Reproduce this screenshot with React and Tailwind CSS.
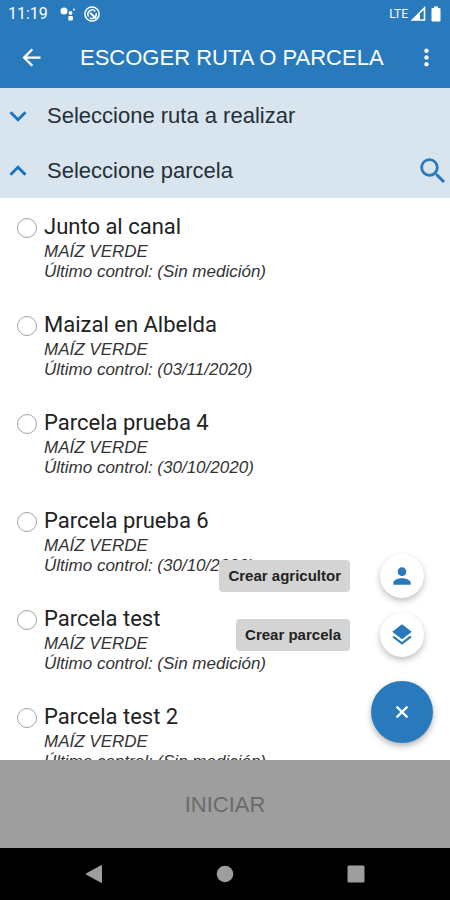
import React, { useState } from 'react';
import {
  MdArrowBack,
  MdExpandLess,
  MdExpandMore,
  MdLayers,
  MdMoreVert,
  MdPerson,
  MdSearch,
} from 'react-icons/md';

const parcels = [
  { id: 1, name: 'Junto al canal', crop: 'MAÍZ VERDE', last: 'Sin medición' },
  { id: 2, name: 'Maizal en Albelda', crop: 'MAÍZ VERDE', last: '03/11/2020' },
  { id: 3, name: 'Parcela prueba 4', crop: 'MAÍZ VERDE', last: '30/10/2020' },
  { id: 4, name: 'Parcela prueba 6', crop: 'MAÍZ VERDE', last: '30/10/2020' },
  { id: 5, name: 'Parcela test', crop: 'MAÍZ VERDE', last: 'Sin medición' },
  { id: 6, name: 'Parcela test 2', crop: 'MAÍZ VERDE', last: 'Sin medición' },
];

const StatusBar = () => (
  <div className="flex h-7 shrink-0 items-center justify-between px-2 font-['Roboto',sans-serif] text-white">
    <div className="flex items-center">
      <span className="w-10 text-base">11:19</span>
      <svg className="ml-3 size-4" viewBox="0 0 16 16" fill="currentColor" aria-hidden="true">
        <circle cx="4" cy="5" r="3.5" />
        <circle cx="10.5" cy="7" r="1.9" />
        <circle cx="14" cy="3.5" r="1" />
        <rect x="8.3" y="10" width="4.6" height="4.4" rx="1" />
      </svg>
      <svg className="ml-2 size-4" viewBox="0 0 16 16" fill="none" stroke="currentColor" strokeWidth="1.5" aria-hidden="true">
        <circle cx="8" cy="8" r="7.1" />
        <path d="M4.6 10.6a4.3 4.3 0 0 1 6.8-5.2M12.2 7a4.3 4.3 0 0 1-6.4 4.8" />
        <path d="M6 6.8l6 5.4" strokeWidth="2" />
      </svg>
    </div>
    <div className="flex items-center">
      <span className="text-xs">LTE</span>
      <svg className="ml-0.5 size-4" viewBox="0 0 16 16" aria-hidden="true">
        <path d="M14.5 2v12H2.5z" fill="none" stroke="currentColor" strokeWidth="1.6" />
        <path d="M10 6.5V14H2.5z" fill="currentColor" />
      </svg>
      <svg className="ml-1 h-4 w-3" viewBox="0 0 12 16" fill="currentColor" aria-hidden="true">
        <path d="M4 0.5h4V2h1.5a1 1 0 0 1 1 1v11.5a1 1 0 0 1-1 1h-7a1 1 0 0 1-1-1V3a1 1 0 0 1 1-1H4z" />
      </svg>
    </div>
  </div>
);

const Chevron = ({ open }) =>
  open ? (
    <MdExpandLess className="size-[34px] shrink-0 text-[#1673c1]" />
  ) : (
    <MdExpandMore className="size-[34px] shrink-0 text-[#1673c1]" />
  );

const Parcel = ({ parcel, checked, onSelect }) => (
  <li className="h-[98px]">
    <label className="flex gap-[7px]">
      <input
        type="radio"
        name="parcel"
        checked={checked}
        onChange={() => onSelect(parcel.id)}
        className="mt-[5px] size-5 shrink-0 appearance-none rounded-full border border-[#a3a3a3] bg-white checked:border-4 checked:border-[#287abc]"
      />
      <span className="flex flex-col text-[#333]">
        <span className="pb-px font-['Roboto',sans-serif] text-[22px] leading-7 text-[#222]">{parcel.name}</span>
        <span className="text-[17px] leading-5 italic">{parcel.crop}</span>
        <span className="text-[17px] leading-5 italic">Último control: ({parcel.last})</span>
      </span>
    </label>
  </li>
);

const FabAction = ({ label, children }) => (
  <button type="button" className="flex items-center gap-[30px] pr-[9px]">
    <span className="rounded bg-[#d4d4d4] px-[9px] py-1 text-[15px] leading-6 font-bold text-[#222]">{label}</span>
    <span className="flex size-11 items-center justify-center rounded-full bg-white text-[#287abc] shadow-[0_3px_6px_rgba(0,0,0,0.25)]">
      {children}
    </span>
  </button>
);

const App = () => {
  const [selected, setSelected] = useState(null);
  const [routesOpen, setRoutesOpen] = useState(false);
  const [parcelsOpen, setParcelsOpen] = useState(true);
  const [menuOpen, setMenuOpen] = useState(true);

  return (
    <div className="flex h-screen flex-col bg-white font-['Liberation_Sans',Arial,sans-serif]">
      <header className="shrink-0 bg-[#287abc] text-white">
        <StatusBar />
        <div className="flex h-15 items-center pr-2.5 pb-0.5 pl-4.5">
          <button type="button" aria-label="Volver">
            <MdArrowBack className="size-[27px]" />
          </button>
          <h1 className="flex-1 pl-[35px] text-[22px] whitespace-nowrap">ESCOGER RUTA O PARCELA</h1>
          <button type="button" aria-label="Más opciones">
            <MdMoreVert className="size-[27px]" />
          </button>
        </div>
      </header>

      <div className="shrink-0 bg-[#d8e4ee] text-[22px] text-[#263038]">
        <button
          type="button"
          aria-expanded={routesOpen}
          onClick={() => setRoutesOpen(!routesOpen)}
          className="flex h-[55px] w-full items-center gap-3 pl-px"
        >
          <Chevron open={routesOpen} />
          Seleccione ruta a realizar
        </button>
        <div className="flex h-[55px] items-center">
          <button
            type="button"
            aria-expanded={parcelsOpen}
            onClick={() => setParcelsOpen(!parcelsOpen)}
            className="flex flex-1 items-center gap-3 pl-px"
          >
            <Chevron open={parcelsOpen} />
            Seleccione parcela
          </button>
          <button type="button" aria-label="Buscar">
            <MdSearch className="size-[34px] text-[#287abc]" />
          </button>
        </div>
      </div>

      <main className="relative min-h-0 flex-1">
        <ul className="h-full overflow-hidden pt-[15px] pl-[17px]">
          {parcelsOpen &&
            parcels.map((parcel) => (
              <Parcel key={parcel.id} parcel={parcel} checked={selected === parcel.id} onSelect={setSelected} />
            ))}
        </ul>

        {/* floating actions over the list */}
        <div className="absolute right-[17px] bottom-[17px] flex flex-col items-end gap-6">
          {menuOpen && (
            <div className="flex flex-col items-end gap-[15px]">
              <FabAction label="Crear agricultor">
                <MdPerson className="size-[26px]" />
              </FabAction>
              <FabAction label="Crear parcela">
                <MdLayers className="size-[26px]" />
              </FabAction>
            </div>
          )}
          <button
            type="button"
            aria-label="Cerrar menú"
            onClick={() => setMenuOpen(!menuOpen)}
            className="flex size-[62px] items-center justify-center rounded-full bg-[#287abc] text-white shadow-[0_3px_6px_rgba(0,0,0,0.3)]"
          >
            <svg className="size-5" viewBox="0 0 20 20" fill="none" stroke="currentColor" strokeWidth="2.2">
              <path d="M4.6 4.6l10.8 10.8M15.4 4.6L4.6 15.4" />
            </svg>
          </button>
        </div>
      </main>

      <button
        type="button"
        disabled={selected === null}
        className="h-22 shrink-0 bg-[#9e9e9e] text-[22px] text-[#6b6b6b]"
      >
        INICIAR
      </button>

      <nav className="flex h-13 shrink-0 items-center justify-around bg-black px-7 text-[#9e9e9e]">
        <button type="button" aria-label="Atrás">
          <svg className="size-5" viewBox="0 0 20 20" fill="currentColor">
            <path d="M17.5 1.5v17L2 10z" stroke="currentColor" strokeLinejoin="round" />
          </svg>
        </button>
        <button type="button" aria-label="Inicio">
          <svg className="size-5" viewBox="0 0 20 20" fill="currentColor">
            <circle cx="10" cy="10" r="8.3" />
          </svg>
        </button>
        <button type="button" aria-label="Recientes">
          <svg className="size-5" viewBox="0 0 20 20" fill="currentColor">
            <rect x="1.5" y="1.5" width="17" height="17" rx="1.5" />
          </svg>
        </button>
      </nav>
    </div>
  );
};

export default App;
